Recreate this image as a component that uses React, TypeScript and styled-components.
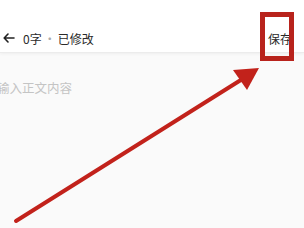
import React from "react";
import styled, { createGlobalStyle } from "styled-components";

const GlobalStyle = createGlobalStyle`
  html, body {
    margin: 0;
    padding: 0;
    background: #fafafa;
  }
  body {
    font-family: "Noto Sans CJK SC", "Noto Sans", sans-serif;
  }
`;

const App = () => {
  return (
    <>
      <GlobalStyle />
      <Page>
        <Header>
          <Left>
            <BackIcon viewBox="0 0 12 10">
              <path
                d="M11 5H1.5M5 1L1.2 5L5 9"
                fill="none"
                stroke="#222"
                strokeWidth="1.6"
                strokeLinecap="round"
                strokeLinejoin="round"
              />
            </BackIcon>
            <Status>0字</Status>
            <Dot>·</Dot>
            <Status>已修改</Status>
          </Left>
          <SaveButton>保存</SaveButton>
        </Header>
        <Editor>
          <Placeholder>输入正文内容</Placeholder>
        </Editor>
        <Highlight />
        <Annotation viewBox="0 0 304 228">
          <line
            x1="16"
            y1="221"
            x2="252"
            y2="73"
            stroke="#c2221b"
            strokeWidth="4"
            strokeLinecap="round"
          />
          <polygon points="259,68 233,70 247,90" fill="#c2221b" />
        </Annotation>
      </Page>
    </>
  );
};

export default App;

const Page = styled.div`
  position: relative;
  width: 304px;
  height: 228px;
  overflow: hidden;
  background: #fafafa;
`;

const Header = styled.div`
  display: flex;
  align-items: center;
  justify-content: space-between;
  height: 28px;
  padding: 24px 12px 0 3px;
  background: #ffffff;
  border-bottom: 1px solid #ececec;
  box-shadow: 0 1px 3px rgba(0, 0, 0, 0.05);
`;

const Left = styled.div`
  display: flex;
  align-items: center;
`;

const BackIcon = styled.svg`
  width: 12px;
  height: 10px;
  margin-right: 8px;
`;

const Status = styled.span`
  font-size: 12px;
  color: #2a2a2a;
`;

const Dot = styled.span`
  font-size: 12px;
  color: #aaa;
  margin: 0 2px;
`;

const SaveButton = styled.span`
  font-size: 12px;
  color: #2a2a2a;
`;

const Editor = styled.div`
  padding: 25px 0 0 0;
`;

const Placeholder = styled.div`
  font-size: 12.5px;
  color: #c4c4c4;
  margin-left: -3px;
`;

const Highlight = styled.div`
  position: absolute;
  left: 260px;
  top: 12px;
  width: 24px;
  height: 39px;
  border: 5px solid #b8231c;
`;

const Annotation = styled.svg`
  position: absolute;
  left: 0;
  top: 0;
  width: 304px;
  height: 228px;
  pointer-events: none;
`;
